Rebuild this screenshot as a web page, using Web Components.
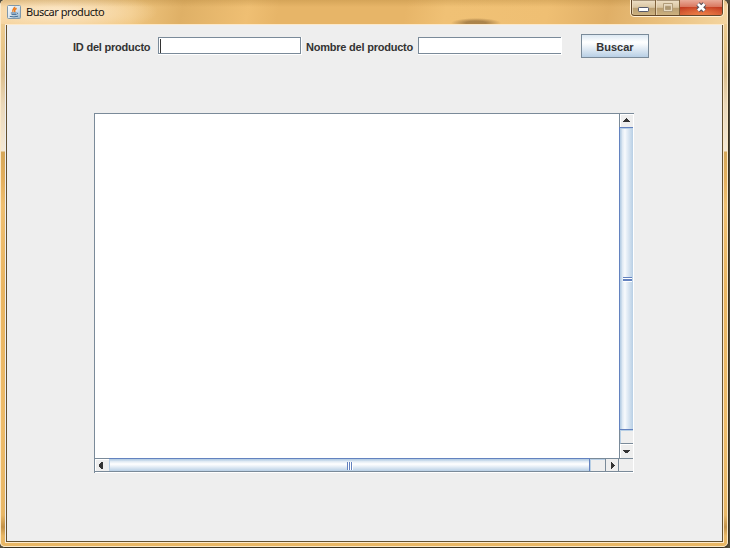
<!DOCTYPE html>
<html lang="es">
<head>
<meta charset="utf-8">
<title>Buscar producto</title>
<style>
html,body{margin:0;width:730px;height:548px;overflow:hidden;background:#504b3b}
</style>
</head>
<body>
<app-window heading="Buscar producto">
  <search-form></search-form>
  <scroll-pane></scroll-pane>
</app-window>
<script>
const define = (name, html, setup) => customElements.define(name, class extends HTMLElement {
  connectedCallback() {
    if (this.shadowRoot) return;
    const t = document.createElement('template');
    t.innerHTML = html;
    const root = this.attachShadow({ mode: 'open' });
    root.append(t.content.cloneNode(true));
    if (setup) setup(this, root);
  }
});

define('java-icon', `
<style>:host{display:block;width:14px;height:14px}svg{display:block}</style>
<svg width="14" height="14" viewBox="0 0 14 14">
  <defs><linearGradient id="g" x1="0" y1="0" x2="1" y2="1"><stop offset="0" stop-color="#fafcfd"/><stop offset=".55" stop-color="#d9e5ee"/><stop offset="1" stop-color="#8fb0c8"/></linearGradient></defs>
  <rect x=".5" y=".5" width="13" height="13" rx="1" fill="url(#g)" stroke="#7f98ab"/>
  <path d="M7.600 1.800C8 3.500 4.500 4.600 6 7M9.600 3.300C7.200 4.600 7.500 5.300 7.900 7" fill="none" stroke="#ee7d20" stroke-width="1.600"/>
  <path d="M3.800 8H9.400M4.500 9.600H9M2.800 11.400Q7 12.500 11 11.200M9.800 7.600Q11.600 8 9.600 9.600" fill="none" stroke="#466f95" stroke-width="1"/>
</svg>`);

define('window-controls', `
<style>:host{display:block;width:94px;height:17px}svg{display:block}</style>
<svg width="94" height="17" viewBox="0 0 94 17">
  <defs>
    <linearGradient id="a" x1="0" y1="0" x2="0" y2="1"><stop offset="0" stop-color="#eee0c7"/><stop offset=".48" stop-color="#d9c5a1"/><stop offset=".5" stop-color="#b99e71"/><stop offset="1" stop-color="#ceb27f"/></linearGradient>
    <linearGradient id="r" x1="0" y1="0" x2="0" y2="1"><stop offset="0" stop-color="#e9ab98"/><stop offset=".45" stop-color="#d97860"/><stop offset=".5" stop-color="#c33d22"/><stop offset="1" stop-color="#d35a33"/></linearGradient>
    <radialGradient id="s" cx=".5" cy="1" r=".65"><stop offset="0" stop-color="#f48a4c" stop-opacity=".8"/><stop offset="1" stop-color="#f48a4c" stop-opacity="0"/></radialGradient>
  </defs>
  <path d="M.5 0V13Q.5 16.5 4 16.5H90Q93.5 16.5 93.5 13V0" fill="none" stroke="#fff0d4"/>
  <path d="M1.5 0V13Q1.5 15.5 4 15.5H90Q92.500 15.500 92.500 13V0Z" fill="url(#a)" stroke="#63482a"/>
  <path d="M50 0H92V13Q92 15 90 15H50Z" fill="url(#r)"/>
  <path d="M50 0H92V13Q92 15 90 15H50Z" fill="url(#s)"/>
  <path d="M25.500 0V15M49.500 0V15" stroke="#80633c"/>
  <path d="M2.500 0V14M26.500 0V15" stroke="#f2e3c8" stroke-opacity=".65"/>
  <rect x="8.500" y="7.500" width="10" height="4" rx=".7" fill="#fff" stroke="#55596a"/>
  <path d="M33.500 3.500H42.500V11.500H33.500ZM35.500 6.500H40.500V9.500H35.500Z" fill="#dccbaf" stroke="#b19c79"/>
  <rect x="34.500" y="4.500" width="7" height="6" fill="none" stroke="#e7dac1"/>
  <rect x="36" y="7" width="4" height="2" fill="#ad9770"/>
  <path d="M68 4 74.500 10.500M74.500 4 68 10.500" stroke="#57515b" stroke-width="4.800"/>
  <path d="M68 4 74.500 10.500M74.500 4 68 10.500" stroke="#fff" stroke-width="2.700"/>
</svg>`);

define('app-window', `
<style>
:host{display:block;box-sizing:border-box;width:729px;height:548px;border-right:1px solid #39301f;border-bottom:1px solid #39301f;border-radius:5px 6px 6px 5px;overflow:hidden;background:#fbe9c8}
.frame{box-sizing:border-box;display:grid;grid-template-rows:24px 1fr;width:728px;height:547px;padding:0 1px 1px;background:#fbe9c8;border-radius:5px}
.glass{display:grid;grid-template-rows:24px 1fr;border-radius:4px;overflow:hidden;grid-row:1/3;
background:linear-gradient(#f1d19a 0,#e8c688 48px,#ddc08e 75px,#ead8b9 105px,#f4e9d6 151px,#d5a758 152px,#e3af5d 180px,#efbf70 205px,#e9b561 290px,#edbb69 425px,#e8b766 515px,#c29147 527px,#e8b765 536px,#e9b765)}
header{display:flex;justify-content:space-between;background:linear-gradient(#a4762d44 0,#0000 7px),radial-gradient(ellipse 100px 22px at 57px 12px,#fff0dacc,#fbe3bd88 60%,#0000),radial-gradient(ellipse 25px 5px at 475px 23px,#8b6636aa 40%,#0000),linear-gradient(100deg,#f3ce94 0,#f0c680 130px,#dfb066 180px,#efbf73 245px,#e7b568 275px,#e7b568 400px,#f0c175 440px,#efbf73 540px,#e0af66 600px,#e9bf7c 650px,#f4d5a0)}
.title{display:flex;padding:5px 0 0 6px;gap:5px}
h1{font:11px/14px "Noto Sans","Open Sans",sans-serif;color:#171411;margin:0;white-space:nowrap;letter-spacing:-.47px}
window-controls{margin-right:3px}
main{box-sizing:border-box;margin:0 3px 3px 4px;border:1px solid #fce9cb;border-left:0;background:#eee}
.body{box-sizing:border-box;border:solid #62502f;border-width:0 1px 1px;height:517px;margin-left:1px}
</style>
<div class="frame"><div class="glass">
<header><div class="title"><java-icon></java-icon><h1></h1></div><window-controls></window-controls></header>
<main><div class="body"><slot></slot></div></main>
</div></div>`, (el, root) => root.querySelector('h1').textContent = el.getAttribute('heading'));

define('text-field', `
<style>
:host{display:block;box-sizing:border-box;width:144px;height:18px;border-right:1px solid #fff;border-bottom:1px solid #fff}
.box{box-sizing:border-box;width:143px;height:17px;border:1px solid #7a8a99;background:#fff;padding:1px}
:host([open-end]) .box{border-right:0}
i{display:none;width:1px;height:14px;background:#333}
:host([active]) i{display:block}
</style><div class="box"><i></i></div>`);

define('field-label', `
<style>:host{display:block;box-sizing:border-box;font:bold 11px/14px "Liberation Sans",Arial,sans-serif;color:#333;white-space:nowrap;padding-top:3px}</style><slot></slot>`);

define('push-button', `
<style>
:host{display:block}
button{display:block;box-sizing:border-box;width:68px;height:24px;padding:2px 0 0;border:1px solid #7a8a99;border-radius:0;background:linear-gradient(#dce8f2 0,#fff 7px,#f9fbfd 9px,#b8cfe5 22px);font:bold 11px/14px "Liberation Sans",Arial,sans-serif;letter-spacing:0;color:#333}
</style><button><slot></slot></button>`);

define('search-form', `
<style>
:host{display:grid;grid-template-columns:85px 148px 112px 163px 68px;padding:9px 0 0 66px;height:79px;box-sizing:border-box;align-items:start}
text-field,field-label{margin-top:3px}
</style>
<field-label style="letter-spacing:-.22px">ID del producto</field-label>
<text-field active></text-field>
<field-label style="letter-spacing:-.22px">Nombre del producto</field-label>
<text-field open-end></text-field>
<push-button>Buscar</push-button>`);

define('arrow-button', `
<style>:host{display:block;box-sizing:border-box;overflow:hidden;background:#eee;border-top:1px solid #fff;border-left:1px solid #fff}svg{display:block}</style>
<svg width="12" height="12" viewBox="0 0 12 12" shape-rendering="crispEdges"><path fill="#333"/></svg>`,
(el, root) => root.querySelector('path').setAttribute('d', {
  up:'M5 3H6V4H7V5H8V6H9V7H2V6H3V5H4V4H5Z',
  down:'M2 5H9V6H8V7H7V8H4V7H3V6H2Z',
  left:'M7 2V9H5V8H4V7H3V4H4V3H5V2Z',
  right:'M5 3H6V4H7V5H8V6H9V7H8V8H7V9H6V10H5Z'
}[el.getAttribute('direction')]));

define('scroll-bar', `
<style>
:host{display:grid;box-sizing:border-box}
:host([vertical]){width:14px;height:344px;grid-template-rows:13px 303px 14px 14px;border-left:1px solid #7a8a99;background:#eee}
:host([horizontal]){width:524px;height:14px;grid-template-rows:12px;grid-template-columns:14px 481px 15px 14px;border-top:1px solid #7a8a99;border-bottom:1px solid #7a8a99}
.thumb,.track{box-sizing:border-box;position:relative}
:host([vertical]) .thumb{margin-left:-1px;border:solid #6382bf;border-width:1px 0 1px 1px;background:linear-gradient(90deg,#b8cfe5 0,#b8cfe5 1px,#dbe7f2 2px,#f9fbfd 5px,#edf3f9 6px,#b8cfe5 13px);box-shadow:inset 0 1px #b8cfe5}
:host([horizontal]) .thumb{margin-top:-1px;border:solid #6382bf;border-width:1px 1px 0 0;background:linear-gradient(#b8cfe5 0,#b8cfe5 1px,#dbe7f2 2px,#fff 5px,#edf3f9 7px,#b8cfe5 12px);box-shadow:inset 1px 0 #b8cfe5}
.track{background:#eee}
:host([vertical]) .track{border-top:1px solid #b8cfe5;border-bottom:1px solid #7a8a99;border-left:1px solid #b8cfe5}
:host([horizontal]) .track{border-left:1px solid #b8cfe5;border-top:1px solid #b8cfe5}
:host([horizontal]) arrow-button.end{border:1px solid #7a8a99;border-top:0;border-bottom:0}
.grip{position:absolute}
:host([vertical]) .grip{left:3px;top:149px;width:9px;height:5px;background:linear-gradient(#6382bf 0 1px,#fff 1px 2px,#6382bf 2px 4px,#fff 4px)}
:host([horizontal]) .grip{left:238px;top:3px;width:6px;height:8px;background:repeating-linear-gradient(90deg,#6382bf 0 1px,#fff 1px 2px)}
</style>
<arrow-button class="start"></arrow-button><div class="thumb"><div class="grip"></div></div><div class="track"></div><arrow-button class="end"></arrow-button>`,
(el, root) => {
  const v = el.hasAttribute('vertical');
  root.querySelector('.start').replaceWith(Object.assign(document.createElement('template'), {innerHTML:`<arrow-button class="start" direction="${v?'up':'left'}"></arrow-button>`}).content);
  root.querySelector('.end').replaceWith(Object.assign(document.createElement('template'), {innerHTML:`<arrow-button class="end" direction="${v?'down':'right'}"></arrow-button>`}).content);
});

define('scroll-pane', `
<style>
:host{display:grid;box-sizing:border-box;width:540px;height:360px;margin:9px 0 0 87px;grid-template-columns:524px 14px;grid-template-rows:344px 14px;border:solid #7a8a99;border-width:1px 0 0 1px;box-shadow:inset -1px -1px #fff}
.view{background:#fff}
.corner{box-sizing:border-box;border:solid #7a8a99;border-width:1px 0 1px 0;background:#eee}
</style>
<div class="view"></div><scroll-bar vertical></scroll-bar><scroll-bar horizontal></scroll-bar><div class="corner"></div>`);
</script>
</body>
</html>
